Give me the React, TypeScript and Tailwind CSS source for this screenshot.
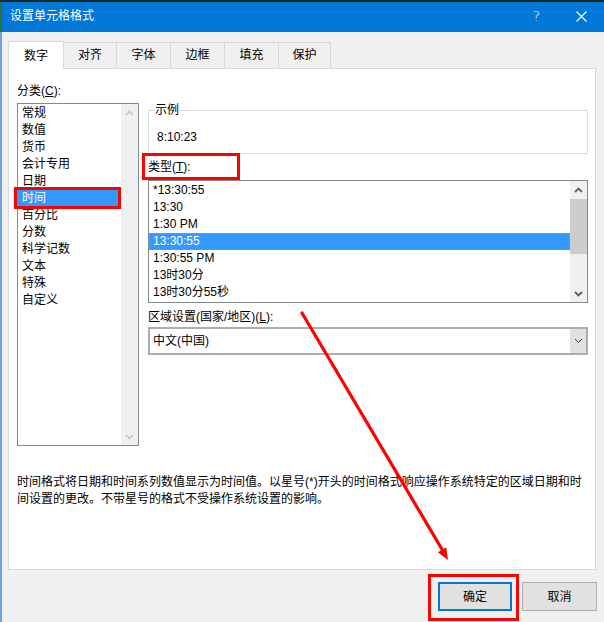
import React from "react";

const cats = ["常规", "数值", "货币", "会计专用", "日期", "时间", "百分比", "分数", "科学记数", "文本", "特殊", "自定义"];
const types = ["*13:30:55", "13:30", "1:30 PM", "13:30:55", "1:30:55 PM", "13时30分", "13时30分55秒"];

function Chev({ up, color, w = 1.8 }: { up?: boolean; color: string; w?: number }) {
  return (
    <svg width="9" height="6" viewBox="0 0 9 6">
      <path d={up ? "M1 5 L4.5 1.5 L8 5" : "M1 1 L4.5 4.5 L8 1"} stroke={color} strokeWidth={w} fill="none" />
    </svg>
  );
}

export default function App() {
  return (
    <div className="relative w-[604px] h-[622px] overflow-hidden bg-[#f0f0f0] text-[12px] text-black font-['Liberation_Sans','Noto_Sans_CJK_SC',sans-serif]">
      <div className="h-[2px] bg-[#1d2a22]" />
      <div className="flex h-[30px] border-l-2 border-[#2f6e3e] bg-[#0078d7] text-white">
        <div className="flex-1 pl-[8px] leading-[28px]">设置单元格格式</div>
        <div className="flex w-[45px] items-center justify-center pb-[2px] text-[14px] font-light font-['DejaVu_Sans',sans-serif]">?</div>
        <div className="flex w-[45px] items-center justify-center pb-[2px]">
          <svg width="11" height="11" viewBox="0 0 11 11">
            <path d="M0.5 0.5 L10.5 10.5 M10.5 0.5 L0.5 10.5" stroke="#fff" strokeWidth="1.1" />
          </svg>
        </div>
      </div>
      <div className="flex flex-col border-l-2 border-[#6fa3d8] h-[590px]">
        <div className="mt-[9px] ml-[6px] flex items-end">
          <div className="relative z-10 -mb-px h-[28px] w-[56px] border border-b-0 border-[#d9d9d9] bg-white pt-[6px] text-center leading-[17px]">数字</div>
          <div className="h-[26px] w-[53px] border-t border-r border-[#d9d9d9] pt-[4px] text-center leading-[17px]">对齐</div>
          <div className="h-[26px] w-[54px] border-t border-r border-[#d9d9d9] pt-[4px] text-center leading-[17px]">字体</div>
          <div className="h-[26px] w-[54px] border-t border-r border-[#d9d9d9] pt-[4px] text-center leading-[17px]">边框</div>
          <div className="h-[26px] w-[54px] border-t border-r border-[#d9d9d9] pt-[4px] text-center leading-[17px]">填充</div>
          <div className="h-[26px] w-[52px] border-t border-r border-[#d9d9d9] pt-[4px] text-center leading-[17px]">保护</div>
        </div>
        <div className="ml-[6px] h-[502px] w-[588px] border border-[#d9d9d9] bg-white pl-[8px] flex flex-col">
          <div className="flex items-start">
            <div className="w-[122px] pt-[14px]">
              <div className="h-[17px] leading-[17px]">
                分类(<span className="underline">C</span>):
              </div>
              <div className="mt-[3px] flex h-[343px] border border-[#828790] bg-white">
                <div className="flex-1 pt-px">
                  {cats.map((c, i) => (
                    <div
                      key={c}
                      className={i === 5 ? "relative h-[17px] bg-[#3399ff] pl-[4px] leading-[17px] text-white" : "h-[17px] pl-[4px] leading-[17px]"}
                    >
                      {c}
                      {i === 5 && <span className="absolute -top-[3px] -bottom-[2px] -left-[4px] right-0 border-[3px] border-[#ff0000]" />}
                    </div>
                  ))}
                </div>
                <div className="flex w-[17px] flex-col justify-between bg-[#f0f0f0]">
                  <div className="flex h-[17px] items-center justify-center">
                    <Chev up color="#c8c8c8" />
                  </div>
                  <div className="flex h-[17px] items-center justify-center">
                    <Chev color="#c8c8c8" />
                  </div>
                </div>
              </div>
            </div>
            <div className="ml-[9px] w-[440px] pt-[33px]">
              <fieldset className="border border-[#dcdcdc] px-0 pt-[10px] pb-[7px]">
                <legend className="ml-[6px] px-0 leading-[17px]">示例</legend>
                <div className="pl-[8px] leading-[17px]">8:10:23</div>
              </fieldset>
              <div className="relative mt-[5px] h-[17px] leading-[17px]">
                类型(<span className="underline">T</span>):
                <span className="absolute -top-[6px] -left-[6px] h-[27px] w-[98px] border-[3px] border-[#ff0000]" />
              </div>
              <div className="mt-[4px] flex h-[123px] border border-[#828790] bg-white">
                <div className="flex-1 pt-px">
                  {types.map((t, i) => (
                    <div
                      key={t}
                      className={i === 3 ? "h-[17px] bg-[#3399ff] pl-[4px] leading-[17px] text-white outline-1 outline-dotted outline-[#c98a4e] -outline-offset-1" : "h-[17px] pl-[4px] leading-[17px]"}
                    >
                      {t}
                    </div>
                  ))}
                </div>
                <div className="flex w-[17px] flex-col bg-[#f0f0f0]">
                  <div className="flex h-[17px] items-center justify-center">
                    <Chev up color="#606060" />
                  </div>
                  <div className="mt-[1px] h-[55px] bg-[#cdcdcd]" />
                  <div className="flex-1" />
                  <div className="flex h-[17px] items-center justify-center">
                    <Chev color="#606060" />
                  </div>
                </div>
              </div>
              <div className="mt-[6px] h-[17px] leading-[17px]">
                区域设置(国家/地区)(<span className="underline">L</span>):
              </div>
              <div className="mt-[1px] flex h-[28px] border-2 border-[#adadad] bg-white">
                <div className="flex-1 pl-[3px] leading-[24px]">中文(中国)</div>
                <div className="flex w-[16px] items-center justify-center bg-[#e1e1e1]">
                  <Chev color="#444" w={1} />
                </div>
              </div>
            </div>
          </div>
          <div className="mt-[28px] whitespace-nowrap leading-[17px]">
            <div>时间格式将日期和时间系列数值显示为时间值。以星号(*)开头的时间格式响应操作系统特定的区域日期和时</div>
            <div>间设置的更改。不带星号的格式不受操作系统设置的影响。</div>
          </div>
        </div>
        <div className="mt-[12px] flex justify-end pr-[7px]">
          <div className="relative flex h-[29px] w-[74px] items-center justify-center border-2 border-[#0078d7] bg-[#e1e1e1]">
            确定
            <span className="absolute -top-[10px] -bottom-[12px] -left-[12px] -right-[9px] border-[3px] border-[#ff0000]" />
          </div>
          <div className="ml-[10px] flex h-[29px] w-[75px] items-center justify-center border border-[#adadad] bg-[#e1e1e1]">
            取消
          </div>
        </div>
      </div>
      <svg className="pointer-events-none absolute left-0 top-0" width="604" height="622" viewBox="0 0 604 622">
        <line x1="302" y1="313" x2="443" y2="551" stroke="#ff0000" strokeWidth="3.2" strokeLinecap="round" />
        <polygon points="437.8,552.3 446.2,547.3 448,560" fill="#ff0000" />
      </svg>
    </div>
  );
}
